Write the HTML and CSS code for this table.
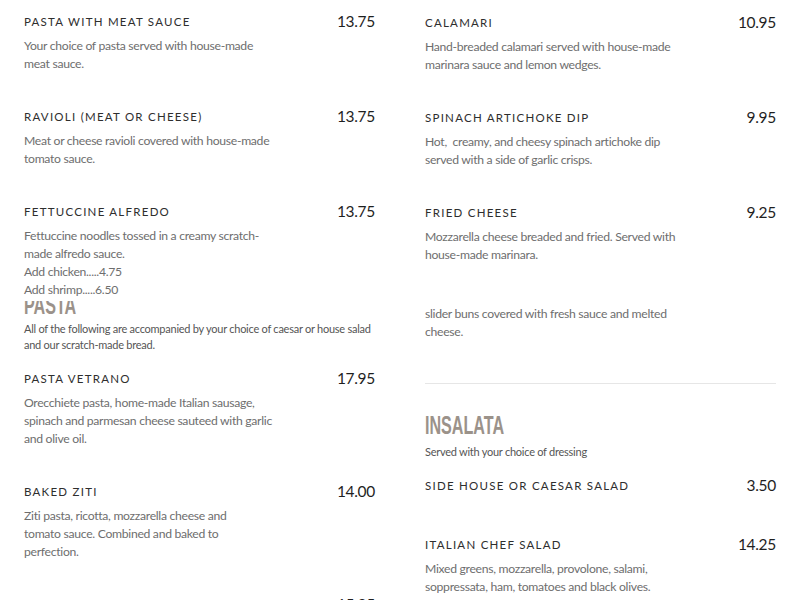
FILE: index.html
```html
<!DOCTYPE html>
<html>
<head>
<meta charset="utf-8">
<link rel="stylesheet" href="styles.css">
</head>
<body>
<div class="menu">
  <div class="col">
    <div class="item">
      <div class="row"><span class="title">Pasta with Meat Sauce</span><span class="price">13.75</span></div>
      <p class="desc">Your choice of pasta served with house-made<br>meat sauce.</p>
    </div>
    <div class="item">
      <div class="row"><span class="title">Ravioli (Meat or Cheese)</span><span class="price">13.75</span></div>
      <p class="desc">Meat or cheese ravioli covered with house-made<br>tomato sauce.</p>
    </div>
    <div class="item item-last">
      <div class="row"><span class="title">Fettuccine Alfredo</span><span class="price">13.75</span></div>
      <p class="desc">Fettuccine noodles tossed in a creamy scratch-<br>made alfredo sauce.<br>Add chicken.....4.75<br>Add shrimp.....6.50</p>
    </div>
    <div class="head-clip"><h2 class="section">Pasta</h2></div>
    <p class="section-sub">All of the following are accompanied by your choice of caesar or house salad<br>and our scratch-made bread.</p>
    <div class="item">
      <div class="row"><span class="title">Pasta Vetrano</span><span class="price">17.95</span></div>
      <p class="desc">Orecchiete pasta, home-made Italian sausage,<br>spinach and parmesan cheese sauteed with garlic<br>and olive oil.</p>
    </div>
    <div class="item">
      <div class="row"><span class="title">Baked Ziti</span><span class="price">14.00</span></div>
      <p class="desc">Ziti pasta, ricotta, mozzarella cheese and<br>tomato sauce. Combined and baked to<br>perfection.</p>
    </div>
    <div class="item item-cut">
      <div class="row"><span class="title">Lasagna</span><span class="price">15.25</span></div>
      <p class="desc">Layers of pasta, meat sauce and cheese.</p>
    </div>
  </div>
  <div class="col col-right">
    <div class="item">
      <div class="row"><span class="title">Calamari</span><span class="price">10.95</span></div>
      <p class="desc">Hand-breaded calamari served with house-made<br>marinara sauce and lemon wedges.</p>
    </div>
    <div class="item">
      <div class="row"><span class="title">Spinach Artichoke Dip</span><span class="price">9.95</span></div>
      <p class="desc">Hot,&nbsp; creamy, and cheesy spinach artichoke dip<br>served with a side of garlic crisps.</p>
    </div>
    <div class="item item-fried">
      <div class="row"><span class="title">Fried Cheese</span><span class="price">9.25</span></div>
      <p class="desc">Mozzarella cheese breaded and fried. Served with<br>house-made marinara.</p>
    </div>
    <p class="desc desc-orphan">slider buns covered with fresh sauce and melted<br>cheese.</p>
    <hr class="rule">
    <h2 class="section section-big">Insalata</h2>
    <p class="section-sub">Served with your choice of dressing</p>
    <div class="item item-nodesc">
      <div class="row"><span class="title">Side House or Caesar Salad</span><span class="price">3.50</span></div>
    </div>
    <div class="item">
      <div class="row"><span class="title">Italian Chef Salad</span><span class="price">14.25</span></div>
      <p class="desc">Mixed greens, mozzarella, provolone, salami,<br>soppressata, ham, tomatoes and black olives.</p>
    </div>
  </div>
</div>
</body>
</html>
```

FILE: styles.css
```css
html, body {
  margin: 0;
  padding: 0;
  background: #ffffff;
  overflow: hidden;
}
body {
  font-family: "Lato", "Noto Sans", sans-serif;
  height: 600px;
}
.menu {
  display: grid;
  grid-template-columns: 351px 351px;
  column-gap: 50px;
  padding: 11px 24px 0;
}
.col-right {
  padding-top: 1px;
}
.item {
  margin-bottom: 33px;
}
.item-last {
  margin-bottom: 0;
}
.item-nodesc {
  margin-bottom: 39px;
}
.item-fried {
  margin-bottom: 41px;
}
.item-cut {
  margin-top: 1px;
}
.row {
  display: flex;
  justify-content: space-between;
  align-items: center;
  height: 20px;
}
.title {
  font-size: 11.5px;
  letter-spacing: 1.25px;
  text-transform: uppercase;
  color: #2e2e2e;
}
.price {
  font-size: 15.5px;
  letter-spacing: -0.3px;
  color: #1f1f1f;
}
.desc {
  margin: 6px 0 0;
  white-space: nowrap;
  font-size: 12.2px;
  letter-spacing: -0.3px;
  line-height: 18px;
  color: #6e6e6e;
}
.desc-orphan {
  margin: 0;
}
.head-clip {
  height: 14px;
  margin-top: 2px;
  overflow: hidden;
  display: flex;
  align-items: flex-end;
}
.section {
  margin: 0;
  font-family: "Liberation Sans Narrow", "Liberation Sans", sans-serif;
  font-weight: 700;
  font-size: 26px;
  line-height: 26px;
  text-transform: uppercase;
  color: #9b928a;
  display: inline-block;
  transform: scaleX(0.62);
  transform-origin: left center;
}
.head-clip .section {
  margin-bottom: -3px;
}
.section-sub {
  margin: 6px 0 15px;
  white-space: nowrap;
  font-size: 11px;
  letter-spacing: -0.25px;
  line-height: 16px;
  color: #555555;
}
.rule {
  margin: 42px 0 0;
  border: 0;
  border-top: 1px solid #e6e6e6;
  height: 0;
}
.section-big {
  margin-top: 28px;
  margin-bottom: 0;
}
```
